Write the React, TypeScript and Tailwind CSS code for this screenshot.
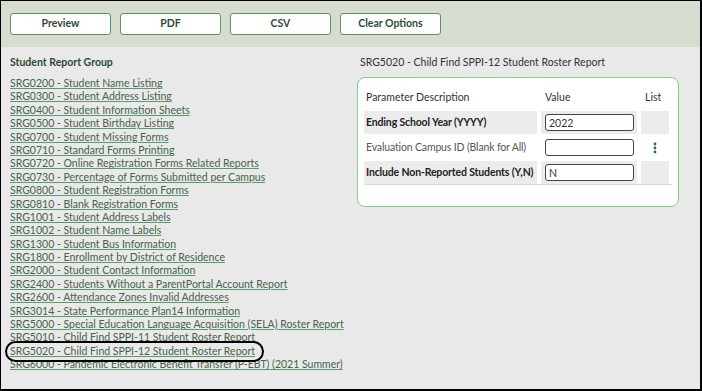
import { useState } from "react";

const reports = [
  "SRG0200 - Student Name Listing",
  "SRG0300 - Student Address Listing",
  "SRG0400 - Student Information Sheets",
  "SRG0500 - Student Birthday Listing",
  "SRG0700 - Student Missing Forms",
  "SRG0710 - Standard Forms Printing",
  "SRG0720 - Online Registration Forms Related Reports",
  "SRG0730 - Percentage of Forms Submitted per Campus",
  "SRG0800 - Student Registration Forms",
  "SRG0810 - Blank Registration Forms",
  "SRG1001 - Student Address Labels",
  "SRG1002 - Student Name Labels",
  "SRG1300 - Student Bus Information",
  "SRG1800 - Enrollment by District of Residence",
  "SRG2000 - Student Contact Information",
  "SRG2400 - Students Without a ParentPortal Account Report",
  "SRG2600 - Attendance Zones Invalid Addresses",
  "SRG3014 - State Performance Plan14 Information",
  "SRG5000 - Special Education Language Acquisition (SELA) Roster Report",
  "SRG5010 - Child Find SPPI-11 Student Roster Report",
  "SRG5020 - Child Find SPPI-12 Student Roster Report",
  "SRG6000 - Pandemic Electronic Benefit Transfer (P-EBT) (2021 Summer)",
];

const params = [
  { label: "Ending School Year (YYYY)", value: "2022", bold: true, list: false },
  { label: "Evaluation Campus ID (Blank for All)", value: "", bold: false, list: true },
  { label: "Include Non-Reported Students (Y,N)", value: "N", bold: true, list: false },
];

function ToolButton({ label }: { label: string }) {
  return (
    <button className="w-[101px] h-[22px] bg-white border border-[#5f8f63] rounded-[3px] text-[10.5px] font-bold text-[#2f4a34]">
      {label}
    </button>
  );
}

function KebabIcon() {
  return (
    <svg width="4" height="12" viewBox="0 0 4 12">
      <circle cx="2" cy="2" r="1.4" fill="#2e6b35" />
      <circle cx="2" cy="6" r="1.4" fill="#2e6b35" />
      <circle cx="2" cy="10" r="1.4" fill="#2e6b35" />
    </svg>
  );
}

export default function App() {
  const [values, setValues] = useState(params.map((p) => p.value));
  const selected = "SRG5020 - Child Find SPPI-12 Student Roster Report";

  return (
    <div
      className="w-[702px] h-[391px] border-t border-l border-r-2 border-b-2 border-black bg-[#e9e9e9] flex flex-col overflow-hidden"
      style={{ fontFamily: "Lato, 'Open Sans', sans-serif" }}
    >
      {/* toolbar */}
      <div className="h-[46px] bg-[#d6ddd0] flex items-center gap-[9px] pl-[9px] pb-[1px]">
        <ToolButton label="Preview" />
        <ToolButton label="PDF" />
        <ToolButton label="CSV" />
        <ToolButton label="Clear Options" />
      </div>

      <div className="flex pl-[9px] pt-[8px]">
        {/* left column */}
        <div className="w-[347px] flex flex-col">
          <h2 className="text-[10.5px] font-bold text-[#2d4a31] leading-[14px] mb-[5px]">
            Student Report Group
          </h2>
          <ul className="flex flex-col">
            {reports.map((r) => (
              <li key={r} className="leading-[13.4px] h-[13.4px]">
                <a
                  href="#"
                  className={`text-[10.5px] text-[#45634b] underline decoration-[#5a9a6a] underline-offset-[1px] ${
                    r === selected
                      ? "relative before:absolute before:-left-[5px] before:-right-[9px] before:-top-[4px] before:-bottom-[5px] before:border-2 before:border-black before:rounded-full"
                      : ""
                  }`}
                >
                  {r}
                </a>
              </li>
            ))}
          </ul>
        </div>

        {/* right column */}
        <div className="flex flex-col">
          <h2 className="text-[10.5px] font-normal text-[#333] leading-[14px] pl-[3px] mb-[8px]">
            SRG5020 - Child Find SPPI-12 Student Roster Report
          </h2>
          <div className="w-[322px] h-[130px] bg-white border border-[#7fd083] rounded-[8px] px-[6px] pt-[11px]">
            <div className="flex text-[10.5px] text-[#333] h-[17px] items-center">
              <span className="w-[179px] pl-[2px]">Parameter Description</span>
              <span className="w-[100px] pl-[2px]">Value</span>
              <span className="pl-[2px]">List</span>
            </div>
            <div className="flex flex-col gap-[2px] mt-[5px] border-b border-[#d3dbe3]">
              {params.map((p, i) => (
                <div key={p.label} className="flex gap-[4px] h-[23px]">
                  <div
                    className={`w-[173px] shrink-0 flex items-center pl-[2px] text-[10.5px] whitespace-nowrap tracking-[-0.15px] ${
                      p.bold ? "bg-[#ececec] font-bold text-[#222]" : "text-[#555]"
                    }`}
                  >
                    {p.label}
                  </div>
                  <div className={`w-[96px] shrink-0 flex items-center pl-[4px] ${p.bold ? "bg-[#ececec]" : ""}`}>
                    <input
                      value={values[i]}
                      onChange={(e) =>
                        setValues(values.map((v, j) => (j === i ? e.target.value : v)))
                      }
                      className="w-[89px] h-[17px] border border-[#444] rounded-[3px] bg-white px-[3px] text-[10.5px] text-[#333] outline-none"
                    />
                  </div>
                  <div className={`w-[28px] shrink-0 flex items-center justify-center ${p.bold ? "bg-[#ececec]" : ""}`}>
                    {p.list && <KebabIcon />}
                  </div>
                </div>
              ))}
            </div>
          </div>
        </div>
      </div>
    </div>
  );
}
